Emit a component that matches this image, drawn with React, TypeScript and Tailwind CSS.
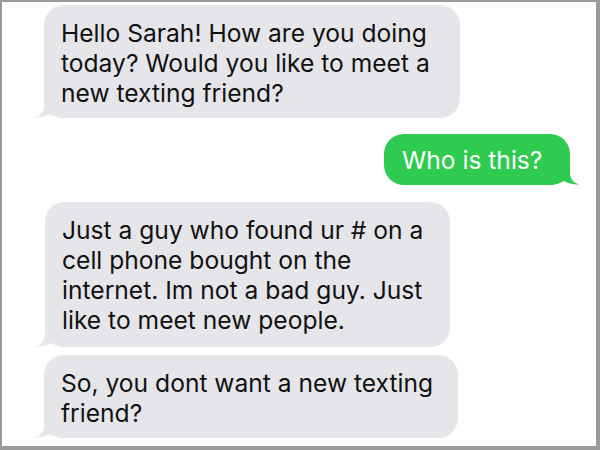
import React from 'react';

const font = { fontFamily: 'Inter, "Liberation Sans", Arial, sans-serif' };

const TailLeft = () => (
  <svg className="absolute -left-[10px] bottom-0 h-[24px] w-[30px]" viewBox="0 0 30 24">
    <path d="M10 0 L10 12 C10 18 6 22 0.5 23.5 C6 24 12 22.5 16 20 C20 22.5 25 23.6 30 24 L30 0 Z" fill="#e5e5ea" />
  </svg>
);

const TailRight = () => (
  <svg className="absolute -right-[10px] bottom-0 h-[24px] w-[30px]" viewBox="0 0 30 24">
    <path d="M20 0 L20 12 C20 18 24 22 29.5 23.5 C24 24 18 22.5 14 20 C10 22.5 5 23.6 0 24 L0 0 Z" fill="#2fcb50" />
  </svg>
);

const Received = ({ lines, className }: { lines: string[]; className: string }) => (
  <div className={`relative rounded-[20px] bg-[#e5e5ea] pl-[17px] pt-[13px] text-[24.6px] leading-[30px] text-[#111] ${className}`}>
    <TailLeft />
    <div className="relative">
      {lines.map((line, i) => (
        <div key={i} className="whitespace-nowrap">{line}</div>
      ))}
    </div>
  </div>
);

const App = () => {
  return (
    <div
      className="box-border flex h-[450px] w-[600px] flex-col border-b-4 border-l-2 border-r-4 border-t-2 border-[#9a9a9a] bg-white"
      style={font}
    >
      <Received
        className="ml-[42px] mt-[3px] w-[416px] pb-[10px]"
        lines={['Hello Sarah! How are you doing', 'today? Would you like to meet a', 'new texting friend?']}
      />

      <div className="relative mr-[26px] mt-[16px] w-[186px] self-end rounded-[20px] bg-[#2fcb50] pb-[10px] pl-[18px] pt-[11px] text-[24.6px] leading-[30px] text-white">
        <TailRight />
        <div className="relative whitespace-nowrap">Who is this?</div>
      </div>

      <Received
        className="ml-[43px] mt-[17px] w-[405px] pb-[12px]"
        lines={['Just a guy who found ur # on a', 'cell phone bought on the', 'internet. Im not a bad guy. Just', 'like to meet new people.']}
      />

      <Received
        className="ml-[42px] mt-[8px] w-[414px] pb-[10px]"
        lines={['So, you dont want a new texting', 'friend?']}
      />
    </div>
  );
};

export default App;
